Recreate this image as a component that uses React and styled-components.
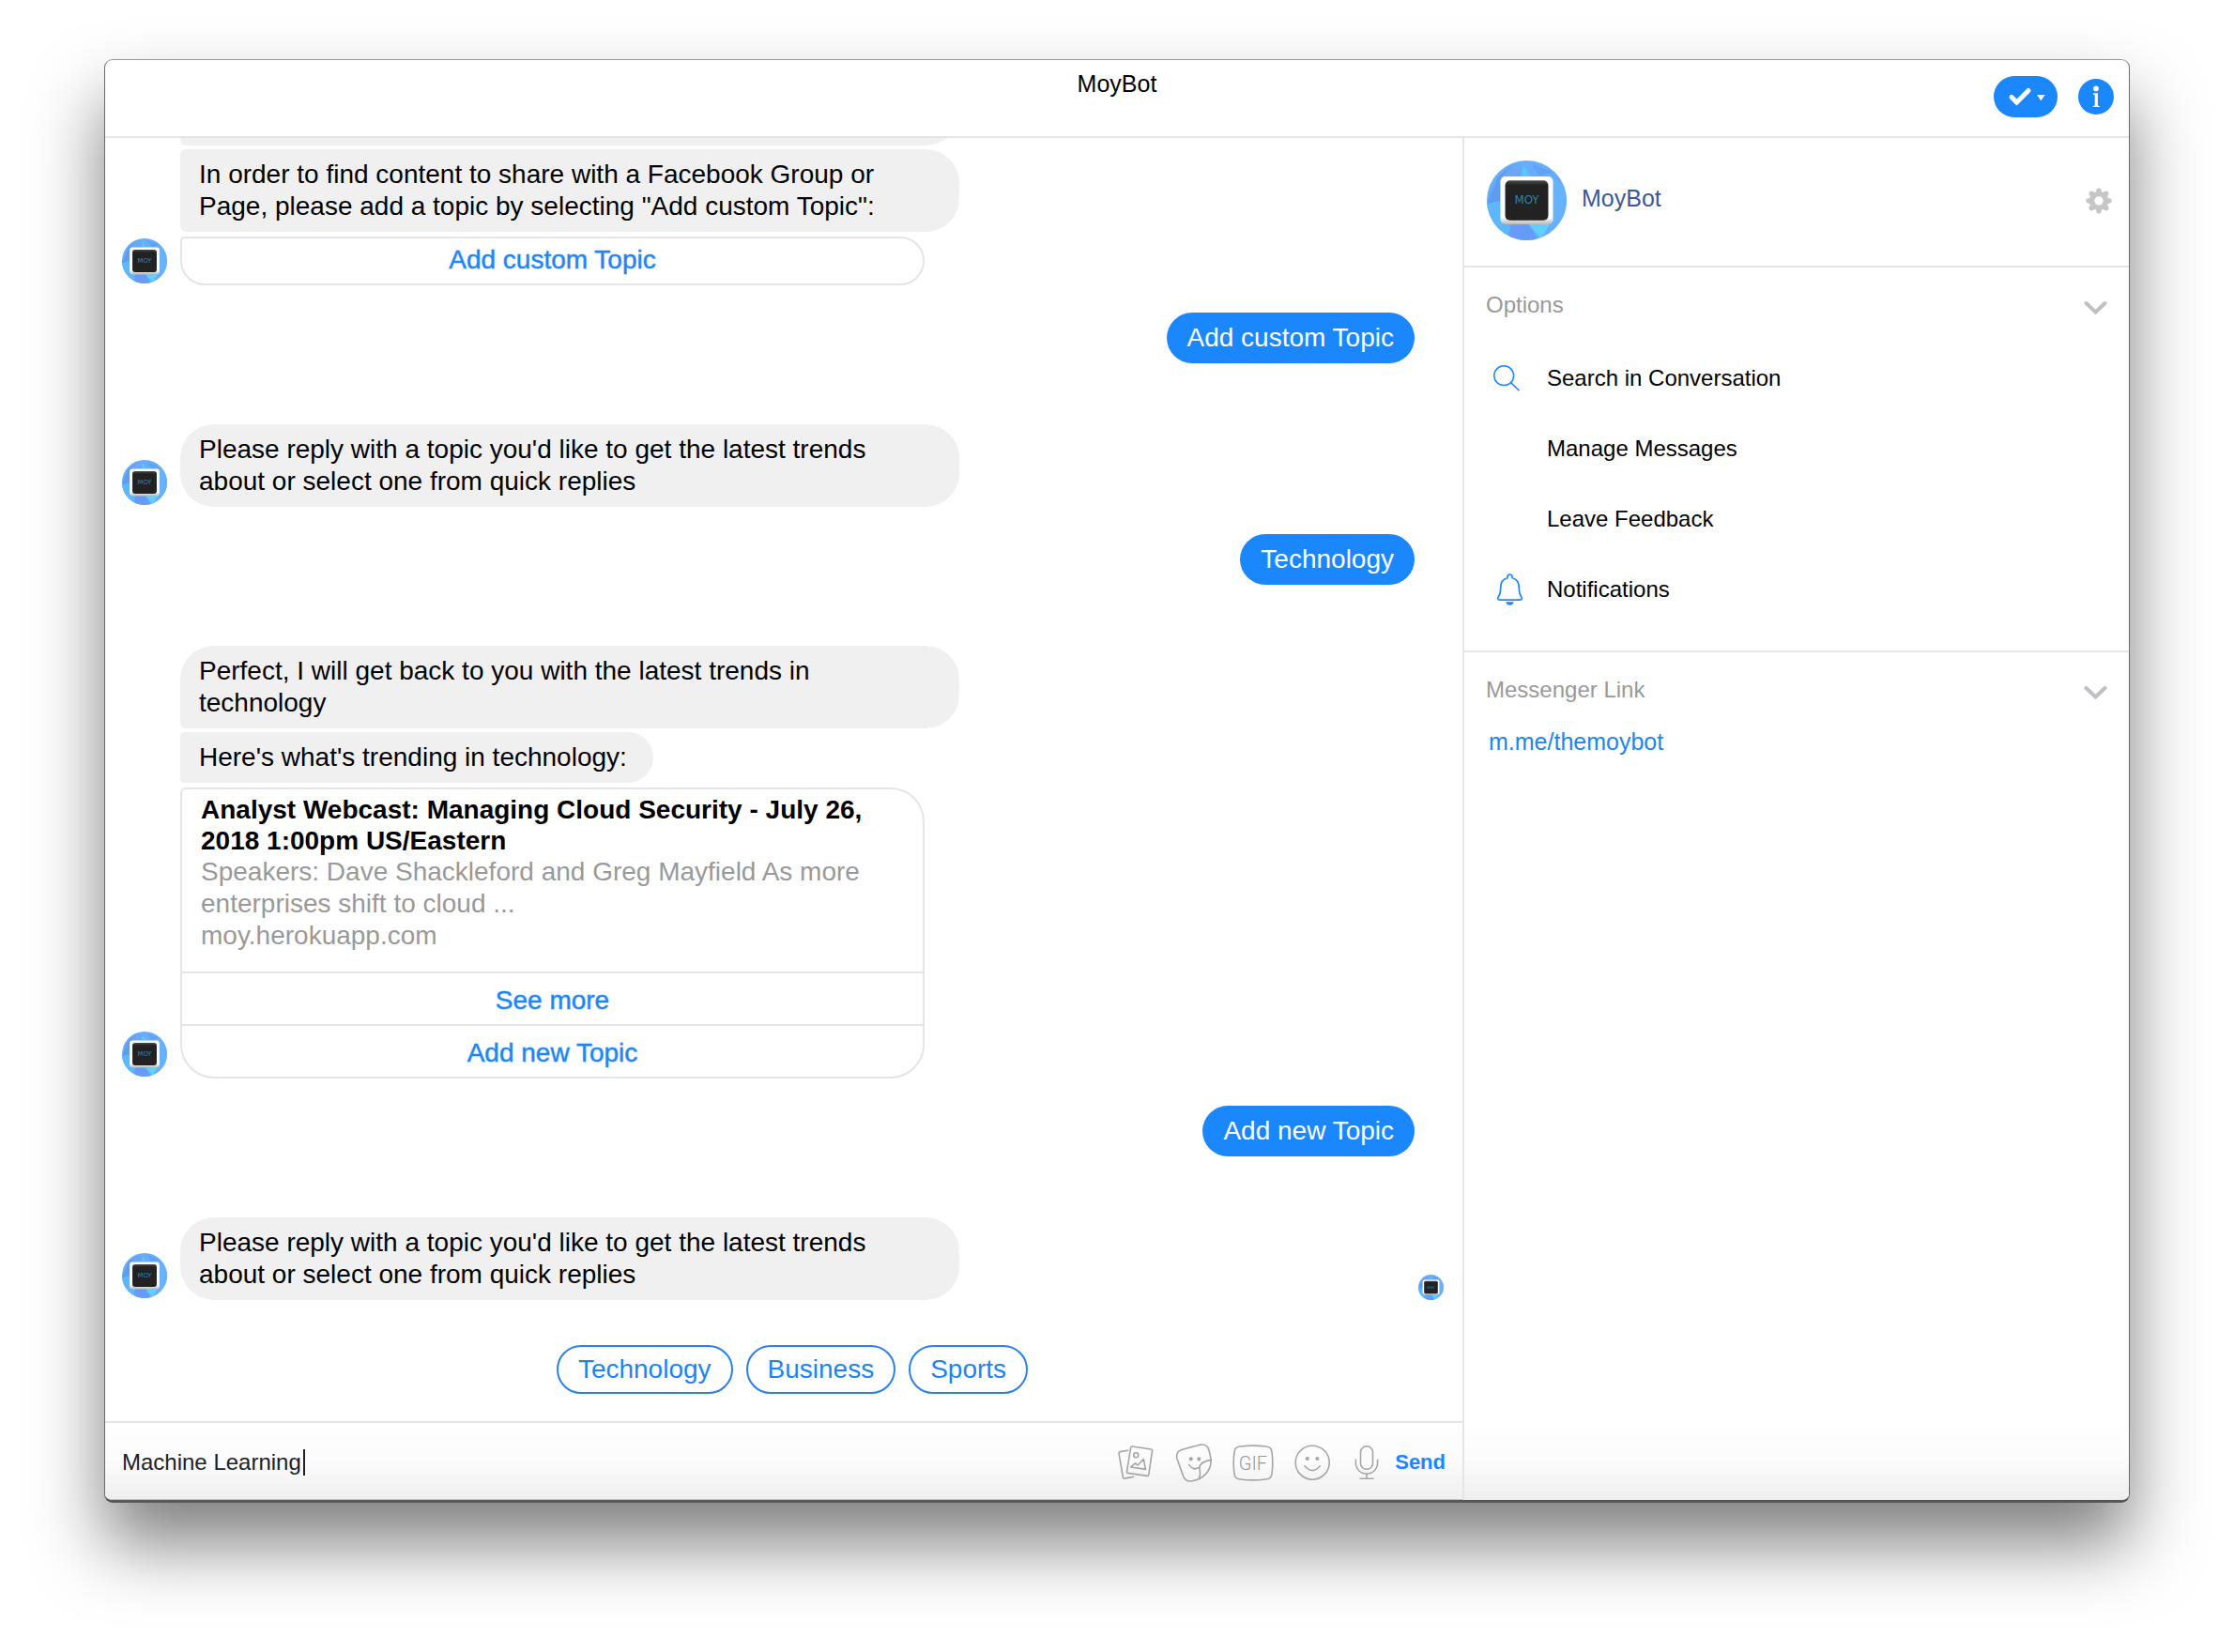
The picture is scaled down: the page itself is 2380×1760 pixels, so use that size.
import React, { useId } from "react";
import styled, { createGlobalStyle, css } from "styled-components";

const blue = "#1a87fc";
const line = "#e5e5e5";

const GlobalStyle = createGlobalStyle`
  *, *::before, *::after { box-sizing: border-box; }
  body {
    margin: 0;
    background: #fff;
    color: #000;
    font-family: "Helvetica Neue", "Liberation Sans", Arial, sans-serif;
    font-size: 24px;
    line-height: 34px;
  }
  button, input { font: inherit; color: inherit; }
  svg { display: block; flex: none; }
`;

const Page = styled.div`
  display: flex;
  min-height: 100vh;
  padding: 63px 111px 159px;
  overflow: hidden;
`;

const Window = styled.div`
  flex: 1;
  min-width: 0;
  display: flex;
  flex-direction: column;
  overflow: hidden;
  background: #fff;
  border: 1px solid #6b6b6b;
  border-top-color: #999;
  border-bottom: 3px solid #565956;
  border-radius: 9px;
  box-shadow: 0 44px 76px rgba(0, 0, 0, 0.5);
`;

const Header = styled.header`
  display: grid;
  grid-template-columns: 1fr auto 1fr;
  align-items: start;
  height: 83px;
  padding: 8px 16px 0;
  border-bottom: 2px solid ${line};
`;

const Title = styled.h1`
  grid-column: 2;
  margin: 0;
  font-size: 25px;
  font-weight: 400;
`;

const Actions = styled.div`
  display: flex;
  align-items: center;
  justify-content: flex-end;
  gap: 22px;
  padding-top: 9px;
`;

const IconButton = styled.button`
  display: block;
  padding: 0;
  border: 0;
  background: none;
  cursor: pointer;
`;

const RoundButton = styled(IconButton)`
  width: ${(p) => p.$width}px;
  height: ${(p) => p.$height}px;
  border-radius: 22px;
  background: ${blue};
`;

const Body = styled.div`
  flex: 1;
  min-height: 0;
  display: flex;
`;

const Chat = styled.main`
  flex: 1;
  min-width: 0;
  display: flex;
  flex-direction: column;
`;

const Messages = styled.div`
  flex: 1 1 0;
  display: flex;
  flex-direction: column;
  justify-content: flex-end;
  overflow: hidden;
  padding: 0 20px 29px 18px;
  font-size: 28px;

  > * { flex: none; }
`;

const BotRow = styled.div`
  display: flex;
  align-items: flex-end;
  margin-top: 65px;
`;

const AvatarSlot = styled.div`
  flex: none;
  padding: 0 14px 2px 0;
`;

const Stack = styled.div`
  min-width: 0;
  display: flex;
  flex-direction: column;
  align-items: flex-start;
`;

const Receipt = styled.div`
  margin-left: auto;
`;

const Bubble = styled.div`
  max-width: 830px;
  padding: 10px 28px 10px 20px;
  background: #f0f0f0;
  border-radius: ${(p) => (p.$joinTop ? 6 : 36)}px 36px 36px ${(p) => (p.$joinBottom ? 6 : 36)}px;

  & + & { margin-top: ${(p) => p.$gap || 4}px; }

  ${(p) => p.$blank && css`
    width: 830px;
    height: 88px;
  `}
`;

const Card = styled.article`
  width: 793px;
  max-width: 100%;
  margin-top: 5px;
  overflow: hidden;
  border: 2px solid ${line};
  border-radius: 6px 36px 36px 36px;
`;

const CardText = styled.div`
  height: 194px;
  padding: 5px 20px 0;
  color: #999;
`;

const CardTitle = styled.h2`
  margin: 0;
  color: #000;
  font-size: 28px;
  line-height: 33px;
  font-weight: 700;
`;

const CardLine = styled.p`
  margin: 0;
`;

const CardButton = styled.button`
  display: block;
  width: 100%;
  padding: ${(p) => (p.$only ? "0 0 2px" : "3px 0 0")};
  height: ${(p) => (p.$only ? 48 : 56)}px;
  border: 0;
  border-top: ${(p) => (p.$only ? "0" : `2px solid ${line}`)};
  background: none;
  color: #1d86f2;
  -webkit-text-stroke: 1px rgba(29, 134, 242, 0.5);
  cursor: pointer;
`;

const UserRow = styled.div`
  display: flex;
  justify-content: flex-end;
  margin-top: 29px;
  padding-right: 31px;
`;

const UserBubble = styled.div`
  padding: 10px 22px;
  border-radius: 27px;
  background: ${blue};
  color: #fff;
`;

const QuickReplies = styled.div`
  display: flex;
  justify-content: center;
  gap: 14px;
  margin-top: 48px;
  padding-left: 20px;
`;

const QuickReply = styled.button`
  height: 52px;
  padding: 0 21px;
  border: 2px solid #2a82e4;
  border-radius: 26px;
  background: #fff;
  color: #1d84ee;
  cursor: pointer;
`;

const Composer = styled.form`
  display: flex;
  align-items: center;
  gap: 15px;
  height: 84px;
  padding: 2px 18px 0;
  border-top: 2px solid ${line};
  border-bottom: 1px solid #c4c6c4;
  background: linear-gradient(#fff, #fbfbfb 50%, #efefef);
`;

const Field = styled.label`
  flex: 1;
  min-width: 0;
  display: flex;
  align-items: center;
`;

const TextInput = styled.input`
  field-sizing: content;
  min-width: 2px;
  max-width: 100%;
  padding: 0;
  border: 0;
  outline: 0;
  background: none;
  color: #1d2129;
`;

const Caret = styled.span`
  width: 2px;
  height: 28px;
  margin-left: 2px;
  background: #1d2129;
`;

const Tools = styled.div`
  display: flex;
  align-items: center;
  gap: 22px;
`;

const SendButton = styled.button`
  padding: 0;
  border: 0;
  background: none;
  color: ${blue};
  font-size: 22px;
  font-weight: 700;
  cursor: pointer;
`;

const Sidebar = styled.aside`
  flex: 0 0 710px;
  border-left: 2px solid ${line};
  background: linear-gradient(transparent calc(100% - 84px), #fbfbfb calc(100% - 42px), #efefef);
`;

const Profile = styled.div`
  display: flex;
  align-items: center;
  gap: 16px;
  padding: 24px 18px 27px 24px;
  border-bottom: 2px solid ${line};
`;

const ProfileName = styled.a`
  flex: 1;
  padding-bottom: 6px;
  color: #3b5998;
  font-size: 25px;
  text-decoration: none;
`;

const Section = styled.section`
  padding: 23px 23px 28px 23px;
  border-bottom: ${(p) => (p.$last ? "0" : `2px solid ${line}`)};
`;

const SectionHead = styled.button`
  display: flex;
  align-items: flex-end;
  justify-content: space-between;
  width: 100%;
  padding: 0;
  border: 0;
  background: none;
  color: #999;
  text-align: left;
  cursor: pointer;
`;

const OptionList = styled.ul`
  margin: 23px 0 0;
  padding: 0;
  list-style: none;
`;

const Option = styled.button`
  display: grid;
  grid-template-columns: 65px 1fr;
  align-items: center;
  width: 100%;
  height: 75px;
  padding: 0;
  border: 0;
  background: none;
  text-align: left;
  cursor: pointer;
`;

const OptionLabel = styled.span`
  grid-column: 2;
`;

const PageLink = styled.a`
  display: inline-block;
  margin: 21px 3px 0;
  color: #1d86e8;
  font-size: 25px;
  text-decoration: none;
`;

function Avatar({ size }) {
  const id = useId();
  return (
    <svg width={size} height={size} viewBox="0 0 100 100" role="img" aria-label="MoyBot">
      <defs>
        <clipPath id={`${id}c`}><circle cx="50" cy="50" r="50" /></clipPath>
        <linearGradient id={`${id}f`} x1="0" y1="0" x2="0" y2="1">
          <stop offset="0.85" stopColor="#fff" />
          <stop offset="1" stopColor="#b9b9b9" />
        </linearGradient>
        <linearGradient id={`${id}k`} x1="0" y1="0" x2="0" y2="1">
          <stop offset="0" stopColor="#4a4a4a" />
          <stop offset="0.12" stopColor="#222" />
        </linearGradient>
      </defs>
      <g clipPath={`url(#${id}c)`}>
        <rect width="100" height="100" fill="#66aefb" />
        <path d="M0 54 L18 48 L34 80 L20 100 H0Z" fill="#5cb8fd" />
        <path d="M0 54 L14 20 L34 4 L20 50Z" fill="#5f9cf0" />
        <path d="M34 4 L45 8 L40 24 L18 22Z" fill="#6ba6f8" />
        <path d="M45 5 L54 20 H44Z" fill="#5cc6ff" />
        <path d="M56 4 L82 14 L66 20Z" fill="#5ea3f8" />
        <path d="M30 78 L26 100 H64 L52 78Z" fill="#669cf8" />
        <path d="M52 80 L68 98 L80 78Z" fill="#5fd0ff" />
        <path d="M82 20 L100 36 V70 L80 84Z" fill="#68b2fd" />
        <rect x="17" y="20" width="66" height="60" rx="6" fill={`url(#${id}f)`} />
        <rect x="23" y="25" width="54" height="50" rx="6" fill={`url(#${id}k)`} />
        <text x="50" y="54.5" textAnchor="middle" fontFamily="DejaVu Sans, sans-serif" fontSize="14" fill="#2c86a8">MOY</text>
      </g>
    </svg>
  );
}

const CheckIcon = () => (
  <svg width="68" height="44" viewBox="0 0 68 44" fill="none" aria-hidden="true">
    <path d="M19 22.5 L24.5 28 L37 15.5" stroke="#fff" strokeWidth="5" strokeLinecap="round" />
    <path d="M46 20 H54.7 L50.3 26.3Z" fill="#fff" />
  </svg>
);

const InfoIcon = () => (
  <svg width="38" height="38" viewBox="0 0 38 38" fill="#fff" aria-hidden="true">
    <circle cx="19" cy="10.4" r="2.8" />
    <path d="M16 15.3 H20.9 V28.4 L22.8 29 V30 H15.8 V29 L17.7 28.4 V17 L16 16.4Z" />
  </svg>
);

const GearIcon = () => (
  <svg width="28" height="28" viewBox="-14 -14 28 28" aria-hidden="true">
    <circle r="7.4" fill="none" stroke="#c6c6c6" strokeWidth="5.4" />
    {[0, 45, 90, 135, 180, 225, 270, 315].map((a) => (
      <path key={a} transform={`rotate(${a})`} fill="#c6c6c6" d="M-3.4 -8.5 L-2.2 -12.6 Q-1.8 -13.6 -.8 -13.6 H.8 Q1.8 -13.6 2.2 -12.6 L3.4 -8.5Z" />
    ))}
  </svg>
);

const ChevronIcon = () => (
  <svg width="25" height="28" viewBox="0 0 25 28" fill="none" aria-hidden="true">
    <path d="M2.5 9 L12.5 18.5 L22.5 9" stroke="#bfc0c6" strokeWidth="4" strokeLinecap="round" />
  </svg>
);

const SearchIcon = () => (
  <svg width="36" height="28" viewBox="-8 0 36 28" fill="none" stroke={blue} strokeWidth="1.5" aria-hidden="true">
    <circle cx="11.2" cy="11.2" r="10.4" />
    <path d="M18.6 18.6 L27.5 27.3" />
  </svg>
);

const BellIcon = () => (
  <svg width="40" height="34" viewBox="-12 0 40 34" fill="none" stroke={blue} strokeWidth="1.7" aria-hidden="true">
    <path d="M10.8 4.8 C10.4 -.3 16.6 -.3 16.2 4.8 C21 6 23.3 10 23.3 15 C23.3 20 23.9 22.4 25.6 24.4 C27 26.4 26.3 28.2 24.4 28.2 H2.6 C.7 28.2 0 26.4 1.4 24.4 C3.1 22.4 3.7 20 3.7 15 C3.7 10 6 6 10.8 4.8Z" />
    <path d="M10.4 31 H16.6 Q15.8 33 13.5 33 T10.4 31Z" fill={blue} />
  </svg>
);

const ToolSvg = ({ width, children }) => (
  <svg width={width} height="42" viewBox={`0 -1 ${width} 42`} fill="none" stroke="#a6a6a6" strokeWidth="1.6" strokeLinejoin="round" strokeLinecap="round" aria-hidden="true">
    {children}
  </svg>
);

const tools = [
  {
    label: "Add photos",
    icon: (
      <ToolSvg width={40}>
        <path d="M12.7 7.2 L4.2 8.6 Q2.8 8.9 3 10.3 L7.4 36 Q7.7 37.3 9 37.1 L18.5 35.4" />
        <path d="M17.4 3 L37.4 6 Q38.8 6.3 38.6 7.6 L34.8 33.2 Q34.5 34.6 33.2 34.4 L12.7 31.4 Q11.3 31.2 11.5 29.8 L15.6 4.4 Q15.9 2.8 17.4 3Z" />
        <circle cx="21.3" cy="12.3" r="2.5" />
        <path d="M15.7 25 L20.4 20.8 L23.2 23 L29.3 16.5 L31.4 27.4Z" />
      </ToolSvg>
    ),
  },
  {
    label: "Choose a sticker",
    icon: (
      <ToolSvg width={40}>
        <path d="M2.8 15.5 Q1.6 8.6 8 6.5 L26.5 1.4 Q34.8 -.6 37 7 L39.2 17 Q39.4 26 33.6 32.4 Q26.6 39.4 17.3 40 Q11.5 40.2 9.5 34.5Z" />
        <path d="M39 17.4 Q26.6 19.6 27 26.4 Q28.4 32 26.4 37.4" />
        <path d="M15.7 22.6 Q20.6 29.4 26.8 25.2" />
        <circle cx="17.8" cy="16.3" r="1.3" fill="#a6a6a6" />
        <circle cx="26.3" cy="16.3" r="1.3" fill="#a6a6a6" />
      </ToolSvg>
    ),
  },
  {
    label: "Choose a GIF",
    icon: (
      <ToolSvg width={44}>
        <path d="M8 3 Q22 1.2 36 3 Q41.5 3.5 42 9 Q43.6 20.5 42 32 Q41.5 37.5 36 38 Q22 39.8 8 38 Q2.5 37.5 2 32 Q.4 20.5 2 9 Q2.5 3.5 8 3Z" />
        <text x="22" y="28" textAnchor="middle" fontFamily="Roboto, sans-serif" fontWeight="300" fontSize="20" fill="#999" stroke="none">GIF</text>
      </ToolSvg>
    ),
  },
  {
    label: "Choose an emoji",
    icon: (
      <ToolSvg width={40}>
        <circle cx="19.2" cy="20.2" r="18" />
        <path d="M11 23.8 Q19.2 33.5 27.4 23.8" />
        <circle cx="13.8" cy="16" r="1.3" fill="#a6a6a6" />
        <circle cx="24.4" cy="16" r="1.3" fill="#a6a6a6" />
      </ToolSvg>
    ),
  },
  {
    label: "Record a voice clip",
    icon: (
      <ToolSvg width={30}>
        <rect x="8.5" y="2.8" width="13" height="24.6" rx="6.5" />
        <path d="M3.4 17.3 V20.5 A11.6 11.6 0 0 0 26.6 20.5 V17.3 M15 32.2 V37 M8 37.2 H22" />
      </ToolSvg>
    ),
  },
];

const options = [
  { label: "Search in Conversation", icon: <SearchIcon /> },
  { label: "Manage Messages" },
  { label: "Leave Feedback" },
  { label: "Notifications", icon: <BellIcon /> },
];

const topicPrompt =
  "Please reply with a topic you'd like to get the latest trends about or select one from quick replies";

function BotMessage({ children, receipt }) {
  return (
    <BotRow>
      <AvatarSlot><Avatar size={48} /></AvatarSlot>
      <Stack>{children}</Stack>
      {receipt && <Receipt><Avatar size={27} /></Receipt>}
    </BotRow>
  );
}

function UserMessage({ children }) {
  return <UserRow><UserBubble>{children}</UserBubble></UserRow>;
}

export default function App() {
  return (
    <>
      <GlobalStyle />
      <Page>
        <Window>
          <Header>
            <Title>MoyBot</Title>
            <Actions>
              <RoundButton type="button" $width={68} $height={44} aria-label="Mark as done"><CheckIcon /></RoundButton>
              <RoundButton type="button" $width={38} $height={38} aria-label="Conversation information"><InfoIcon /></RoundButton>
            </Actions>
          </Header>
          <Body>
            <Chat>
              <Messages>
                <BotMessage>
                  <Bubble $blank $joinBottom aria-hidden="true" />
                  <Bubble $joinTop $joinBottom $gap={3}>
                    In order to find content to share with a Facebook Group or Page, please add a topic by
                    selecting "Add custom Topic":
                  </Bubble>
                  <Card><CardButton type="button" $only>Add custom Topic</CardButton></Card>
                </BotMessage>
                <UserMessage>Add custom Topic</UserMessage>
                <BotMessage><Bubble>{topicPrompt}</Bubble></BotMessage>
                <UserMessage>Technology</UserMessage>
                <BotMessage>
                  <Bubble $joinBottom>Perfect, I will get back to you with the latest trends in technology</Bubble>
                  <Bubble $joinTop $joinBottom>Here's what's trending in technology:</Bubble>
                  <Card>
                    <CardText>
                      <CardTitle>Analyst Webcast: Managing Cloud Security - July 26, 2018 1:00pm US/Eastern</CardTitle>
                      <CardLine>Speakers: Dave Shackleford and Greg Mayfield As more enterprises shift to cloud ...</CardLine>
                      <CardLine>moy.herokuapp.com</CardLine>
                    </CardText>
                    <CardButton type="button">See more</CardButton>
                    <CardButton type="button">Add new Topic</CardButton>
                  </Card>
                </BotMessage>
                <UserMessage>Add new Topic</UserMessage>
                <BotMessage receipt><Bubble>{topicPrompt}</Bubble></BotMessage>
                <QuickReplies>
                  {["Technology", "Business", "Sports"].map((t) => (
                    <QuickReply key={t} type="button">{t}</QuickReply>
                  ))}
                </QuickReplies>
              </Messages>
              <Composer onSubmit={(e) => e.preventDefault()}>
                <Field>
                  <TextInput type="text" aria-label="Type a message" defaultValue="Machine Learning" />
                  <Caret />
                </Field>
                <Tools>
                  {tools.map((t) => (
                    <IconButton key={t.label} type="button" aria-label={t.label}>{t.icon}</IconButton>
                  ))}
                </Tools>
                <SendButton type="submit">Send</SendButton>
              </Composer>
            </Chat>
            <Sidebar>
              <Profile>
                <Avatar size={85} />
                <ProfileName href="#profile">MoyBot</ProfileName>
                <IconButton type="button" aria-label="Settings"><GearIcon /></IconButton>
              </Profile>
              <Section>
                <SectionHead type="button">Options<ChevronIcon /></SectionHead>
                <OptionList>
                  {options.map((o) => (
                    <li key={o.label}>
                      <Option type="button">{o.icon}<OptionLabel>{o.label}</OptionLabel></Option>
                    </li>
                  ))}
                </OptionList>
              </Section>
              <Section $last>
                <SectionHead type="button">Messenger Link<ChevronIcon /></SectionHead>
                <PageLink href="#messenger-link">m.me/themoybot</PageLink>
              </Section>
            </Sidebar>
          </Body>
        </Window>
      </Page>
    </>
  );
}
